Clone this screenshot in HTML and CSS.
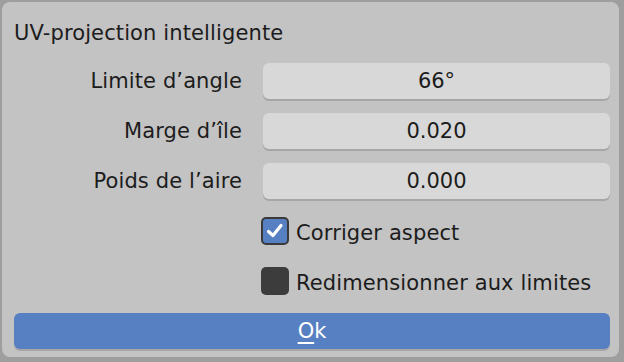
FILE: index.html
```html
<!DOCTYPE html>
<html>
<head>
  <title>UV-projection intelligente</title>
  <link rel="stylesheet" href="styles.css">
</head>
<body>
  <div class="dialog">
    <div class="title">UV-projection intelligente</div>
    <div class="rows">
      <div class="row">
        <span class="label">Limite d’angle</span>
        <div class="field">66°</div>
      </div>
      <div class="row">
        <span class="label">Marge d’île</span>
        <div class="field">0.020</div>
      </div>
      <div class="row">
        <span class="label">Poids de l’aire</span>
        <div class="field">0.000</div>
      </div>
      <div class="row check-row">
        <span class="label"></span>
        <label class="check">
          <span class="box on">
            <svg width="20" height="20" viewBox="0 0 20 20"><path d="M3.5 10.5 L8 14.5 L16 4.5" fill="none" stroke="#ffffff" stroke-width="3.2" stroke-linecap="round" stroke-linejoin="round"/></svg>
          </span>
          <span class="check-text">Corriger aspect</span>
        </label>
      </div>
      <div class="row check-row">
        <span class="label"></span>
        <label class="check">
          <span class="box"></span>
          <span class="check-text">Redimensionner aux limites</span>
        </label>
      </div>
    </div>
    <div class="ok"><u>O</u>k</div>
  </div>
</body>
</html>
```

FILE: styles.css
```css
body {
  margin: 0;
  background-color: #9e9e9e;
  font-family: "DejaVu Sans", sans-serif;
  color: #1c1c1c;
}

.dialog {
  margin: 2px 5px 0 2px;
  height: 355px;
  background-color: #c3c3c3;
  border-radius: 8px;
  padding: 0 9px 0 12px;
  box-sizing: border-box;
}

.title {
  font-size: 21px;
  letter-spacing: 0.12px;
  padding: 19px 0 0 0;
  height: 61px;
  box-sizing: border-box;
}

.rows {
  display: flex;
  flex-direction: column;
  gap: 14px;
}

.row {
  display: flex;
  align-items: center;
  height: 36px;
}

.label {
  width: 247px;
  text-align: right;
  font-size: 21px;
  letter-spacing: 0.12px;
  padding-right: 19px;
  box-sizing: border-box;
  flex-shrink: 0;
}

.field {
  flex: 1;
  height: 36px;
  line-height: 37px;
  background-color: #d8d8d8;
  border-radius: 6px;
  box-shadow: 0 2px 0 #a6a6a6;
  text-align: center;
  font-size: 21px;
  margin-left: 2px;
}

.check {
  display: flex;
  align-items: center;
  gap: 7px;
  font-size: 21px;
  letter-spacing: 0.12px;
}

.check-text {
  padding-top: 3px;
}

.box {
  width: 28px;
  height: 28px;
  border-radius: 5px;
  background-color: #3c3c3c;
  box-sizing: border-box;
  display: flex;
  align-items: center;
  justify-content: center;
}

.box.on {
  background-color: #5680c2;
  border: 2px solid #3a3a3a;
}

.ok {
  margin-top: 14px;
  height: 36px;
  line-height: 36px;
  background-color: #5680c2;
  border-radius: 6px;
  box-shadow: 0 2px 0 #a6a6a6;
  color: #ffffff;
  text-align: center;
  font-size: 21px;
}

.ok u {
  text-underline-offset: 4px;
}
```
